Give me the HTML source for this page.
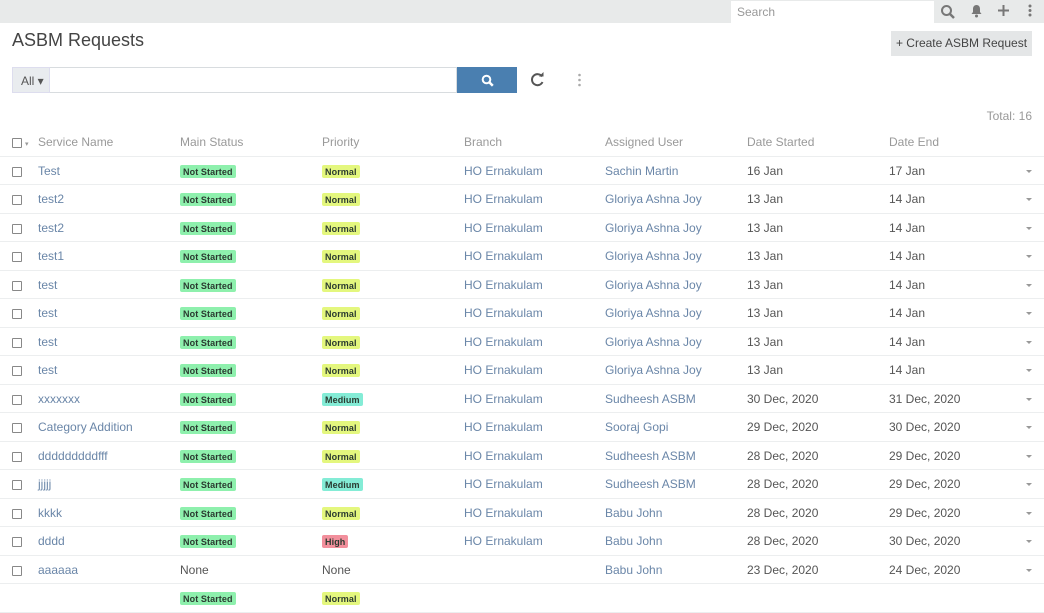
<!DOCTYPE html>
<html><head><meta charset="utf-8"><style>
*{box-sizing:border-box;margin:0;padding:0}
body{width:1044px;height:593px;overflow:hidden;background:#fff;font-family:"Liberation Sans",sans-serif;font-size:12px;color:#555;position:relative}
.abs{position:absolute}
.top{left:0;top:0;width:1044px;height:23px;background:#e8eaea}
.srch{left:731px;top:1px;width:203px;height:22px;background:#fff;color:#999;font-size:12px;padding:4px 0 0 6px}
h1{position:absolute;left:12px;top:30px;font-size:18px;font-weight:normal;color:#444}
.btn{left:891px;top:31px;width:141px;height:25px;background:#e4e6e7;color:#444;font-size:12px;text-align:center;line-height:25px}
.all{left:12px;top:67px;width:38px;height:26px;background:#e9ecef;border:1px solid #dde;color:#555;padding:6px 0 0 8px}
.inp{left:50px;top:67px;width:407px;height:26px;border:1px solid #d8dcdf;border-left:none}
.sb{left:457px;top:67px;width:60px;height:26px;background:#4a7fb0}
.total{right:12px;top:109px;color:#999}
.row{position:absolute;left:0;width:1044px;height:28.5px;border-bottom:1px solid #eceeef}
.row span{position:absolute;top:7px;white-space:nowrap}
.hd span{color:#999}
.cb{position:absolute;left:12px;top:10px;width:10px;height:10px;border:1px solid #888;border-radius:1px}
.lk{color:#6a86a8}
.b{font-size:9px;font-weight:bold;color:#2a3a30;padding:2px 3px 1px;border-radius:2px;top:8px!important;letter-spacing:0.1px}
.ns{background:#8ef0ad}.nm{background:#e4f77e}.md{background:#84ecd6}.hi{background:#f28f9c}
.car{position:absolute;left:1026px;top:13px;width:0;height:0;border-left:3px solid transparent;border-right:3px solid transparent;border-top:3px solid #999}
</style></head><body>
<div class="abs top"></div>
<div class="abs srch">Search</div>
<svg class="abs" style="left:940px;top:4px" width="16" height="16" viewBox="0 0 16 16"><circle cx="6.5" cy="6.5" r="4.5" fill="none" stroke="#777" stroke-width="2"/><path d="M10 10l4 4" stroke="#777" stroke-width="2.5"/></svg>
<svg class="abs" style="left:970px;top:4px" width="13" height="14" viewBox="0 0 13 14"><path d="M6.5 1C4 1 3 3 3 5v3L1.5 10h10L10 8V5c0-2-1-4-3.5-4z" fill="#777"/><circle cx="6.5" cy="12" r="1.5" fill="#777"/></svg>
<svg class="abs" style="left:997px;top:4px" width="13" height="13"><path d="M6.5 1v11M1 6.5h11" stroke="#777" stroke-width="2"/></svg>
<svg class="abs" style="left:1027px;top:3px" width="6" height="15"><circle cx="3" cy="3" r="1.5" fill="#777"/><circle cx="3" cy="7.5" r="1.5" fill="#777"/><circle cx="3" cy="12" r="1.5" fill="#777"/></svg>
<h1>ASBM Requests</h1>
<div class="abs btn">+ Create ASBM Request</div>
<div class="abs all">All ▾</div>
<div class="abs inp"></div>
<div class="abs sb"><svg style="position:absolute;left:24px;top:7px" width="13" height="13" viewBox="0 0 13 13"><circle cx="5.5" cy="5.5" r="3.8" fill="none" stroke="#fff" stroke-width="2"/><path d="M8.3 8.3l3.5 3.5" stroke="#fff" stroke-width="2.5"/></svg></div>
<svg class="abs" style="left:530px;top:72px" width="15" height="15" viewBox="0 0 15 15"><path d="M12 4.5A5.5 5.5 0 1 0 12.5 10" fill="none" stroke="#555" stroke-width="2"/><path d="M9 4.5h4.5V0z" fill="#555"/></svg>
<svg class="abs" style="left:577px;top:73px" width="5" height="14"><circle cx="2.5" cy="2" r="1.3" fill="#aaa"/><circle cx="2.5" cy="7" r="1.3" fill="#aaa"/><circle cx="2.5" cy="12" r="1.3" fill="#aaa"/></svg>
<div class="abs total">Total: 16</div>
<div class="row hd" style="top:128px"><div class="cb" style="top:10px"></div><span style="left:25px;top:12px;font-size:7px">▾</span><span style="left:38px">Service Name</span><span style="left:180px">Main Status</span><span style="left:322px">Priority</span><span style="left:464px">Branch</span><span style="left:605px">Assigned User</span><span style="left:747px">Date Started</span><span style="left:889px">Date End</span></div>
<div id="rows"></div>
<script>
var d=[["Test","n","Sachin Martin","16 Jan","17 Jan"],["test2","n","Gloriya Ashna Joy","13 Jan","14 Jan"],["test2","n","Gloriya Ashna Joy","13 Jan","14 Jan"],["test1","n","Gloriya Ashna Joy","13 Jan","14 Jan"],["test","n","Gloriya Ashna Joy","13 Jan","14 Jan"],["test","n","Gloriya Ashna Joy","13 Jan","14 Jan"],["test","n","Gloriya Ashna Joy","13 Jan","14 Jan"],["test","n","Gloriya Ashna Joy","13 Jan","14 Jan"],["xxxxxxx","m","Sudheesh ASBM","30 Dec, 2020","31 Dec, 2020"],["Category Addition","n","Sooraj Gopi","29 Dec, 2020","30 Dec, 2020"],["dddddddddfff","n","Sudheesh ASBM","28 Dec, 2020","29 Dec, 2020"],["jjjjj","m","Sudheesh ASBM","28 Dec, 2020","29 Dec, 2020"],["kkkk","n","Babu John","28 Dec, 2020","29 Dec, 2020"],["dddd","h","Babu John","28 Dec, 2020","30 Dec, 2020"],["aaaaaa","x","Babu John","23 Dec, 2020","24 Dec, 2020"],["","n","","",""]];
var h="";d.forEach(function(r,i){var t=156.5+i*28.5;var st,pr;
if(r[1]=="x"){st='<span style="left:180px">None</span>';pr='<span style="left:322px">None</span>'}else{st='<span class="b ns" style="left:180px">Not Started</span>';pr={n:'<span class="b nm" style="left:322px">Normal</span>',m:'<span class="b md" style="left:322px">Medium</span>',h:'<span class="b hi" style="left:322px">High</span>'}[r[1]]}
h+='<div class="row" style="top:'+t+'px">'+(r[0]?'<div class="cb"></div>':'')+'<span class="lk" style="left:38px">'+r[0]+'</span>'+st+pr+(r[1]!="x"&&r[0]?'<span class="lk" style="left:464px">HO Ernakulam</span>':'')+'<span class="lk" style="left:605px">'+r[2]+'</span><span style="left:747px">'+r[3]+'</span><span style="left:889px">'+r[4]+'</span>'+(r[0]?'<div class="car"></div>':'')+'</div>'});
document.getElementById("rows").innerHTML=h;
</script>
</body></html>
